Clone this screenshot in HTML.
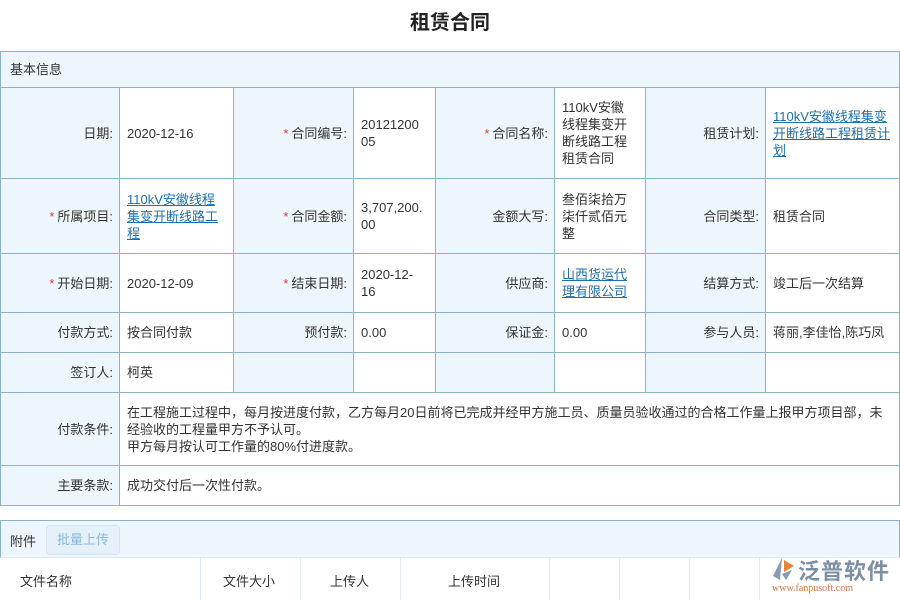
<!DOCTYPE html>
<html><head><meta charset="utf-8"><style>
body{margin:0;width:900px;height:600px;overflow:hidden;background:#fff;font-family:"Liberation Sans","Noto Sans CJK SC",sans-serif;font-size:13px;color:#333;position:relative}
.title{position:absolute;top:6px;left:0;width:900px;text-align:center;font-size:20px;font-weight:bold;color:#222}
table{position:absolute;border-collapse:collapse;table-layout:fixed}
td{border:1px solid #8db3c7;padding:0 4px 0 7px;line-height:17px;vertical-align:middle;white-space:nowrap;overflow:hidden}
td.w{white-space:normal}
td.l{background:#eef6fd;text-align:right;padding-right:6px}
.s{color:#e03a3a;margin-right:3px}
a{color:#1f6fa8;text-decoration:underline}
.hd{background:#eef6fd;height:35px;padding-left:9px}
.att{position:absolute;left:0;top:520px;width:898px;height:36px;border:1px solid #8db3c7;border-bottom:1px solid #e3eaf0;background:#eef6fd}
.btn{position:absolute;left:45px;top:4px;width:72px;height:28px;border:1px solid #d3e4f2;border-radius:4px;background:#e6f0fa;color:#8ab9de;line-height:28px;text-align:center}
.row2{position:absolute;left:0;top:557px;width:900px;height:43px}
.row2 div{position:absolute;top:0;height:43px;border-left:1px solid #e3eaf0}
.row2 span{position:absolute;top:14px}
</style></head><body>
<div class="title">租赁合同</div>
<table style="left:0;top:51px;width:899px">
<colgroup><col style="width:119px"><col style="width:114px"><col style="width:120px"><col style="width:82px"><col style="width:119px"><col style="width:91px"><col style="width:120px"><col style="width:134px"></colgroup>
<tr><td colspan="8" class="hd" style="height:35px;padding-left:9px">基本信息</td></tr>
<tr style="height:91px"><td class="l">日期:</td><td>2020-12-16</td><td class="l"><span class="s">*</span>合同编号:</td><td>20121200<br>05</td><td class="l"><span class="s">*</span>合同名称:</td><td>110kV安徽<br>线程集变开<br>断线路工程<br>租赁合同</td><td class="l">租赁计划:</td><td><a>110kV安徽线程集变<br>开断线路工程租赁计<br>划</a></td></tr>
<tr style="height:75px"><td class="l"><span class="s">*</span>所属项目:</td><td><a>110kV安徽线程<br>集变开断线路工<br>程</a></td><td class="l"><span class="s">*</span>合同金额:</td><td>3,707,200.<br>00</td><td class="l">金额大写:</td><td>叁佰柒拾万<br>柒仟贰佰元<br>整</td><td class="l">合同类型:</td><td>租赁合同</td></tr>
<tr style="height:59px"><td class="l"><span class="s">*</span>开始日期:</td><td>2020-12-09</td><td class="l"><span class="s">*</span>结束日期:</td><td>2020-12-<br>16</td><td class="l">供应商:</td><td><a>山西货运代<br>理有限公司</a></td><td class="l">结算方式:</td><td>竣工后一次结算</td></tr>
<tr style="height:40px"><td class="l">付款方式:</td><td>按合同付款</td><td class="l">预付款:</td><td>0.00</td><td class="l">保证金:</td><td>0.00</td><td class="l">参与人员:</td><td>蒋丽,李佳怡,陈巧凤</td></tr>
<tr style="height:40px"><td class="l">签订人:</td><td>柯英</td><td class="l"></td><td></td><td class="l"></td><td></td><td class="l"></td><td></td></tr>
<tr style="height:73px"><td class="l">付款条件:</td><td colspan="7" class="w">在工程施工过程中，每月按进度付款，乙方每月20日前将已完成并经甲方施工员、质量员验收通过的合格工作量上报甲方项目部，未经验收的工程量甲方不予认可。<br>甲方每月按认可工作量的80%付进度款。</td></tr>
<tr style="height:40px"><td class="l">主要条款:</td><td colspan="7">成功交付后一次性付款。</td></tr>
</table>
<div class="att"><span style="position:absolute;left:9px;top:10px">附件</span><div class="btn">批量上传</div></div>
<div class="row2">
<span style="left:20px">文件名称</span>
<div style="left:200px"></div><span style="left:223px">文件大小</span>
<div style="left:300px"></div><span style="left:330px">上传人</span>
<div style="left:400px"></div><span style="left:448px">上传时间</span>
<div style="left:549px"></div><div style="left:619px"></div><div style="left:689px"></div><div style="left:759px"></div>
</div>
<div style="position:absolute;left:770px;top:556px;width:125px;height:42px">
<svg width="26" height="26" viewBox="0 0 26 26" style="position:absolute;left:0;top:0"><path d="M12 2 L3 20 L10 24 Z" fill="#8a9bb0"/><path d="M14 4 L24 10 L14 16 Z" fill="#e8843a"/><path d="M12 18 L22 14 L16 24 Z" fill="#8a9bb0"/></svg>
<span style="position:absolute;left:28px;top:-2px;font-size:22px;color:#7d8ea5;font-weight:bold;letter-spacing:1px">泛普软件</span>
<span style="position:absolute;left:2px;top:27px;font-size:10px;color:#d07a4a;font-family:'Liberation Serif',serif">www.fanpusoft.com</span>
</div>
</body></html>
